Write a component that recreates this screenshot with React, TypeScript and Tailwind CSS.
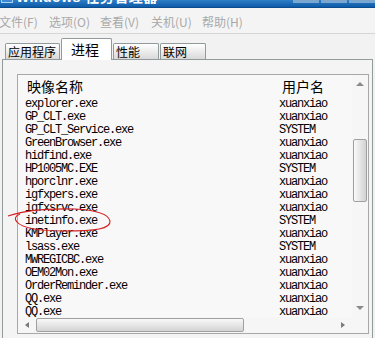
const rows: [string, string][] = [
  ['explorer.exe', 'xuanxiao'],
  ['GP_CLT.exe', 'xuanxiao'],
  ['GP_CLT_Service.exe', 'SYSTEM'],
  ['GreenBrowser.exe', 'xuanxiao'],
  ['hidfind.exe', 'xuanxiao'],
  ['HP1005MC.EXE', 'SYSTEM'],
  ['hporclnr.exe', 'xuanxiao'],
  ['igfxpers.exe', 'xuanxiao'],
  ['igfxsrvc.exe', 'xuanxiao'],
  ['inetinfo.exe', 'SYSTEM'],
  ['KMPlayer.exe', 'xuanxiao'],
  ['lsass.exe', 'SYSTEM'],
  ['MWREGICBC.exe', 'xuanxiao'],
  ['OEM02Mon.exe', 'xuanxiao'],
  ['OrderReminder.exe', 'xuanxiao'],
  ['QQ.exe', 'xuanxiao'],
  ['QQ.exe', 'xuanxiao'],
];

const menus = ['文件(F)', '选项(O)', '查看(V)', '关机(U)', '帮助(H)'];

const cjk = "font-['Noto_Sans_CJK_SC',sans-serif]";
const mono = "font-['Liberation_Mono','Noto_Sans_CJK_SC',monospace] text-[12px] tracking-[-1.2px]";

function Tab({ label, active, w }: { label: string; active?: boolean; w: string }) {
  if (active) {
    return (
      <div className={`${w} h-[22px] -mb-px bg-white border border-b-0 border-[#919b9c] rounded-t-[2px] flex items-center pl-[9px] text-[14px] text-black whitespace-nowrap z-10`}>
        {label}
      </div>
    );
  }
  return (
    <div className={`${w} h-[16px] bg-gradient-to-b from-white to-[#d9d9d9] border border-b-0 border-[#919b9c] rounded-t-[2px] flex items-center pl-[2px] text-[12px] text-black leading-none whitespace-nowrap`}>
      {label}
    </div>
  );
}

export default function App() {
  return (
    <div className={`w-[375px] h-[338px] overflow-hidden bg-[#f2f2f2] relative ${cjk}`}>
      {/* title bar, cropped */}
      <div className="h-[7px] overflow-hidden bg-gradient-to-b from-[#2d7fc7] to-[#0d5aa8] relative">
        <div className="flex items-center gap-[3px] h-[20px] -mt-[13px] pl-[1px]">
          <div className="w-[12px] h-[12px] bg-[#3a8ad6] border border-white/60" />
          <span className="text-white text-[14px] font-bold tracking-[0.5px] font-['Liberation_Sans','Noto_Sans_CJK_SC',sans-serif] whitespace-nowrap">
            Windows 任务管理器
          </span>
        </div>
        <div className="absolute right-0 top-0 flex gap-[2px]">
          <div className="w-[26px] h-[3px] bg-[#7aa6cf]" />
          <div className="w-[26px] h-[3px] bg-[#7aa6cf]" />
          <div className="w-[26px] h-[3px] bg-[#7aa6cf]" />
        </div>
      </div>
      <div className="h-px bg-[#0a4c8c]" />
      {/* menu bar */}
      <div className="h-[26px] bg-[#f4f4f4] border-b border-[#d6d6d6] flex items-center pt-[3px] text-[12px] text-[#a9a9a9] whitespace-nowrap">
        {menus.map((m, i) => (
          <span key={i} className={i === 0 ? 'w-[50px] -ml-[1px]' : 'w-[51px]'}>
            {m}
          </span>
        ))}
      </div>
      {/* tabs */}
      <div className="flex items-end h-[25px] pl-[5px] gap-px">
        <Tab label="应用程序" w="w-[55px]" />
        <Tab label="进程" active w="w-[51px]" />
        <Tab label="性能" w="w-[46px]" />
        <Tab label="联网" w="w-[46px]" />
      </div>
      {/* panel */}
      <div className="mx-[2px] border border-[#919b9c] bg-[#f4f4f4] h-[300px] pt-[14px] pl-[14px] pr-[5px]">
        <div className="w-[352px] h-[260px] border border-[#a8a8a8] bg-[#f8f8f8] flex relative">
          <div className="flex-1 flex flex-col min-w-0">
            <div className="flex h-[22px] items-center text-[14px] text-black shrink-0">
              <div className="w-[261px] pl-[9px]">映像名称</div>
              <div className="pl-[3px]">用户名</div>
            </div>
            <div className="flex-1 overflow-hidden text-black">
              {rows.map(([n, u], i) => (
                <div key={i} className={`flex h-[13px] items-center ${mono}`}>
                  <div className="w-[261px] pl-[7px] whitespace-nowrap">{n}</div>
                  <div className="whitespace-nowrap">{u}</div>
                </div>
              ))}
            </div>
            {/* horizontal scrollbar */}
            <div className="h-[16px] flex items-center shrink-0 bg-[#f6f6f6]">
              <div className="w-[18px] flex justify-center">
                <div className="w-0 h-0 border-y-[3px] border-y-transparent border-r-[4px] border-r-[#7a7a7a]" />
              </div>
              <div className="w-[208px] h-[14px] bg-gradient-to-b from-[#f8f8f8] to-[#d4d4d4] border border-[#a0a0a0] rounded-[2px]" />
              <div className="flex-1" />
              <div className="w-[18px] flex justify-center">
                <div className="w-0 h-0 border-y-[3px] border-y-transparent border-l-[4px] border-l-[#7a7a7a]" />
              </div>
            </div>
          </div>
          {/* vertical scrollbar */}
          <div className="w-[16px] flex flex-col items-center bg-[#f6f6f6] pb-[16px]">
            <div className="h-[18px] flex items-center justify-center">
              <div className="w-0 h-0 border-x-[4px] border-x-transparent border-b-[4px] border-b-[#8a8a8a]" />
            </div>
            <div className="h-[46px]" />
            <div className="w-[14px] h-[63px] bg-gradient-to-r from-[#fafafa] to-[#d2d2d2] border border-[#a0a0a0] rounded-[2px]" />
            <div className="flex-1" />
            <div className="h-[18px] flex items-center justify-center">
              <div className="w-0 h-0 border-x-[4px] border-x-transparent border-t-[4px] border-t-[#8a8a8a]" />
            </div>
          </div>
        </div>
      </div>
      {/* red hand-drawn circle */}
      <svg className="absolute left-0 top-0 pointer-events-none" width="375" height="338">
        <path
          d="M8 216 C 20 212, 40 208, 75 209 C 95 210, 108 213, 110 221 C 111 229, 95 231, 65 231 C 40 231, 22 228, 17 222 C 14 219, 15 216, 20 214"
          fill="none"
          stroke="#d42020"
          strokeWidth="1.1"
        />
      </svg>
    </div>
  );
}
